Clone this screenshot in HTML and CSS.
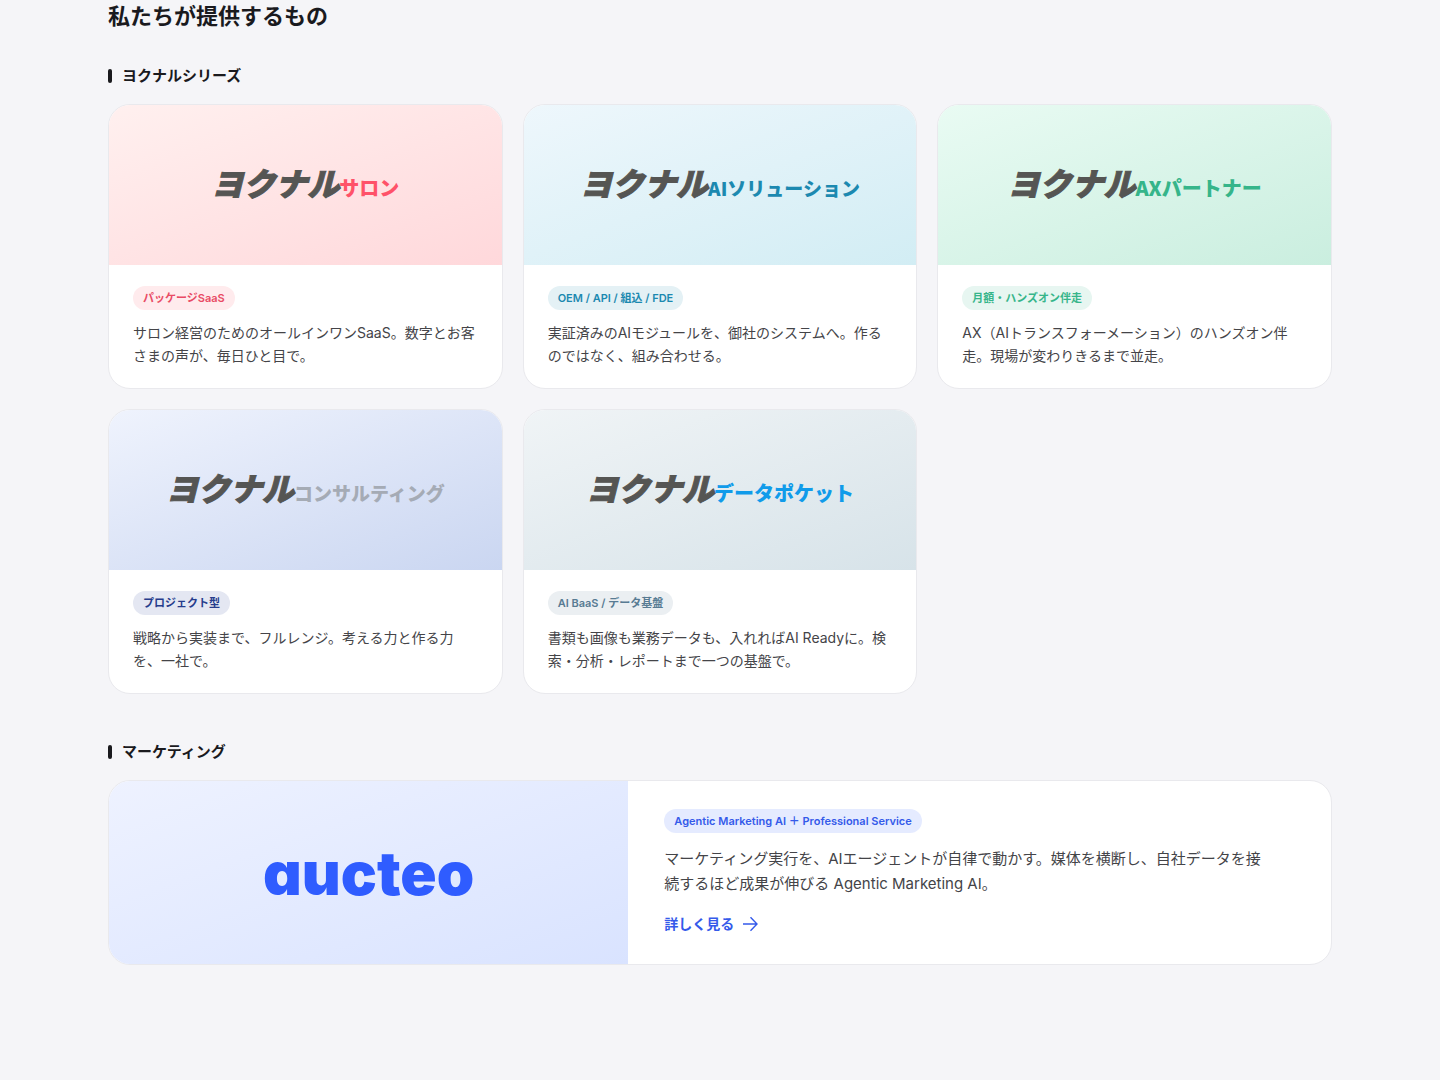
FILE: index.html
```html
<!DOCTYPE html>
<html lang="ja">

<head>
    <meta charset="UTF-8">
    <meta name="viewport" content="width=device-width, initial-scale=1.0">
    <title>私たちが提供するもの</title>
    <link rel="stylesheet" href="styles.css">
</head>

<body>
    <main class="services">
        <h2 class="services-title">私たちが提供するもの</h2>

        <section>
            <h3 class="group-title">ヨクナルシリーズ</h3>
            <div class="card-grid">
                <article class="card salon">
                    <div class="card-visual">
                        <p class="logo"><span class="logo-main">ヨクナル</span><span class="logo-sub">サロン</span></p>
                    </div>
                    <div class="card-body">
                        <span class="badge">パッケージSaaS</span>
                        <p class="card-text">サロン経営のためのオールインワンSaaS。数字とお客さまの声が、毎日ひと目で。</p>
                    </div>
                </article>

                <article class="card solution">
                    <div class="card-visual">
                        <p class="logo"><span class="logo-main">ヨクナル</span><span class="logo-sub logo-sub-long">AIソリューション</span></p>
                    </div>
                    <div class="card-body">
                        <span class="badge">OEM / API / 組込 / FDE</span>
                        <p class="card-text">実証済みのAIモジュールを、御社のシステムへ。作るのではなく、組み合わせる。</p>
                    </div>
                </article>

                <article class="card partner">
                    <div class="card-visual">
                        <p class="logo"><span class="logo-main">ヨクナル</span><span class="logo-sub">AXパートナー</span></p>
                    </div>
                    <div class="card-body">
                        <span class="badge">月額・ハンズオン伴走</span>
                        <p class="card-text">AX（AIトランスフォーメーション）のハンズオン伴走。現場が変わりきるまで並走。</p>
                    </div>
                </article>

                <article class="card consulting">
                    <div class="card-visual">
                        <p class="logo"><span class="logo-main">ヨクナル</span><span class="logo-sub logo-sub-long">コンサルティング</span></p>
                    </div>
                    <div class="card-body">
                        <span class="badge">プロジェクト型</span>
                        <p class="card-text">戦略から実装まで、フルレンジ。考える力と作る力を、一社で。</p>
                    </div>
                </article>

                <article class="card pocket">
                    <div class="card-visual">
                        <p class="logo"><span class="logo-main">ヨクナル</span><span class="logo-sub">データポケット</span></p>
                    </div>
                    <div class="card-body">
                        <span class="badge">AI BaaS / データ基盤</span>
                        <p class="card-text">書類も画像も業務データも、入れればAI Readyに。検索・分析・レポートまで一つの基盤で。</p>
                    </div>
                </article>
            </div>
        </section>

        <section class="marketing">
            <h3 class="group-title">マーケティング</h3>
            <article class="card card-wide aucteo">
                <div class="card-visual">
                    <p class="aucteo-logo">aucteo</p>
                </div>
                <div class="card-body">
                    <span class="badge">Agentic Marketing AI ＋ Professional Service</span>
                    <p class="card-text">マーケティング実行を、AIエージェントが自律で動かす。媒体を横断し、自社データを接<br>続するほど成果が伸びる Agentic Marketing AI。</p>
                    <a class="more" href="#">詳しく見る
                        <svg width="16" height="16" viewBox="0 0 16 16" fill="none" stroke="currentColor" stroke-width="1.4" aria-hidden="true">
                            <path d="M1 8h14M8.500 1.200L15 8l-6.500 6.800" />
                        </svg>
                    </a>
                </div>
            </article>
        </section>
    </main>
</body>

</html>
```
FILE: styles.css
```css
* {
    box-sizing: border-box;
}

body {
    margin: 0;
    background-color: #f5f5f8;
    color: #1a1a1e;
    font-family: Inter, "Noto Sans CJK JP", sans-serif;
}

h2,
h3,
p {
    margin: 0;
}

.services {
    max-width: 1272px;
    margin: 0 auto;
    padding: 0 24px 96px;
}

.services-title {
    font-size: 22px;
    line-height: 32px;
    font-weight: 700;
}

.group-title {
    display: flex;
    align-items: center;
    gap: 10px;
    margin: 34px 0 18px;
    font-size: 15px;
    line-height: 20px;
    font-weight: 700;
}

.group-title::before {
    content: "";
    width: 4px;
    height: 14px;
    border-radius: 2px;
    background-color: #1a1a1e;
}

.marketing .group-title {
    margin-top: 48px;
}

.card-grid {
    display: grid;
    grid-template-columns: repeat(3, 1fr);
    gap: 20px;
}

.card {
    overflow: hidden;
    border: 1px solid #e9e9ed;
    border-radius: 22px;
    background-color: white;
}

.card-visual {
    display: flex;
    align-items: center;
    justify-content: center;
    min-height: 160px;
}

.card-body {
    padding: 21px 24px;
}

.badge {
    display: block;
    width: fit-content;
    margin-bottom: 11px;
    padding: 0 10px;
    border-radius: 12px;
    font-size: 11px;
    line-height: 24px;
    font-weight: 600;
}

.card-text {
    color: #444448;
    font-size: 14px;
    line-height: 23px;
}

/* logos */
.logo {
    display: flex;
    align-items: baseline;
    color: #555553;
    font-family: "Noto Sans CJK JP", sans-serif;
    font-weight: 900;
    line-height: 40px;
    white-space: nowrap;
}

.logo-main {
    font-size: 32px;
    font-style: italic;
    -webkit-text-stroke: 1px currentColor;
}

.logo-sub {
    font-size: 20px;
}

.logo-sub-long {
    font-size: 19px;
}

.aucteo-logo {
    color: #2f5cff;
    font-size: 60px;
    line-height: 72px;
    font-weight: 900;
    font-feature-settings: "cv11";
}

/* card colors */
.salon .card-visual {
    background: linear-gradient(160deg, #fff0ef, #ffd8db);
}

.salon .logo-sub {
    color: #ff5269;
}

.salon .badge {
    background-color: #ffebed;
    color: #e94b65;
}

.solution .card-visual {
    background: linear-gradient(160deg, #eef7fc, #d2edf4);
}

.solution .logo-sub {
    color: #1c89b0;
}

.solution .badge {
    background-color: #e4f1f5;
    color: #1c89b0;
}

.partner .card-visual {
    background: linear-gradient(160deg, #e9fbf3, #caeedf);
}

.partner .logo-sub {
    color: #36b58a;
}

.partner .badge {
    background-color: #e7f6f1;
    color: #36b58a;
}

.consulting .card-visual {
    background: linear-gradient(160deg, #eff3fd, #cad6f1);
}

.consulting .logo-sub {
    color: #a5abb5;
}

.consulting .badge {
    background-color: #e4e7f2;
    color: #263c8c;
}

.pocket .card-visual {
    background: linear-gradient(160deg, #f0f4f6, #d7e3e9);
}

.pocket .logo-sub {
    color: #109bea;
}

.pocket .badge {
    background-color: #ebeff2;
    color: #587b93;
}

.aucteo .card-visual {
    background: linear-gradient(160deg, #eef2ff, #d9e3ff);
}

.aucteo .badge {
    background-color: #e5ebff;
    color: #345aea;
}

/* wide card */
.card-wide {
    display: grid;
    grid-template-columns: 17fr 23fr;
}

.card-wide .card-body {
    padding: 28px 36px;
}

.card-wide .badge {
    margin-bottom: 13px;
}

.card-wide .card-text {
    font-size: 15px;
    line-height: 25px;
}

.more {
    display: flex;
    align-items: center;
    gap: 8px;
    width: fit-content;
    margin-top: 16px;
    color: #345aea;
    font-size: 14px;
    line-height: 24px;
    font-weight: 600;
    text-decoration: none;
}

@media (max-width: 900px) {
    .card-grid,
    .card-wide {
        grid-template-columns: 1fr;
    }
}
```
